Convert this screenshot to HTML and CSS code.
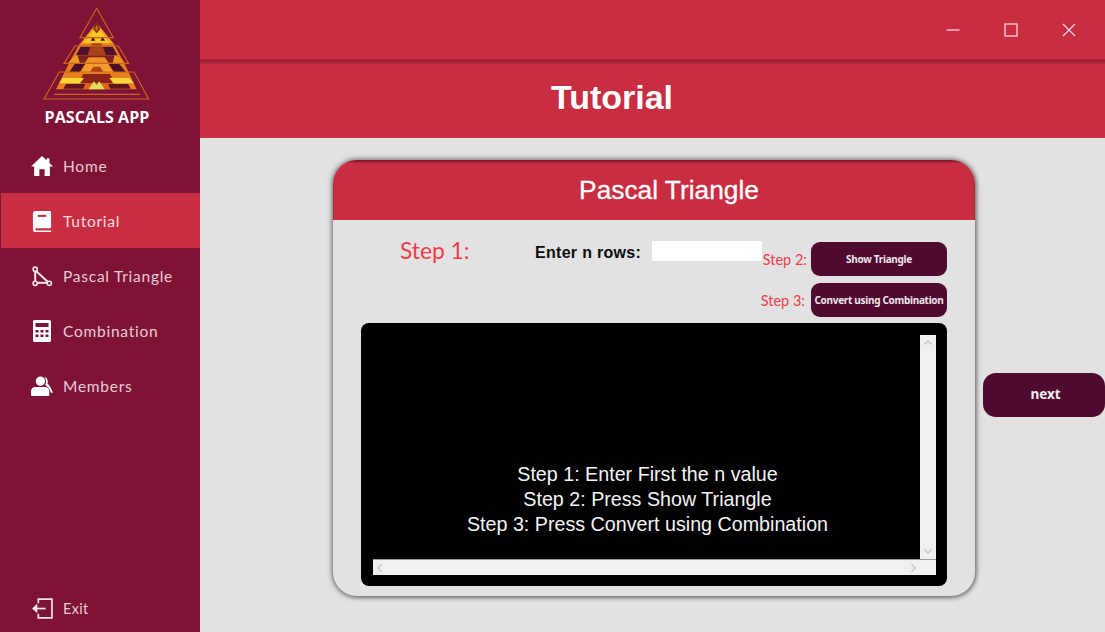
FILE: index.html
```html
<!DOCTYPE html>
<html lang="en">
<head>
<meta charset="utf-8">
<title>Pascals App - Tutorial</title>
<link rel="stylesheet" href="styles.css">
</head>
<body>
<div class="app">
  <aside class="sidebar">
    <div class="brand">
      <svg class="logo" viewBox="0 0 390 315" aria-hidden="true">
        <g class="logo-art">
          <polygon points="200,68 252,132 150,132" fill="#f0a51c"/>
          <polygon points="176,112 190,92 212,92 226,112 242,130 158,130" fill="#f8c626"/>
          <polygon points="200,64 211,86 200,100 189,86" fill="#7d2c12"/>
          <polygon points="200,74 205,86 200,94 195,86" fill="#d8661c"/>
          <polygon points="182,122 189,110 196,122" fill="#4a1022"/>
          <polygon points="211,122 218,110 225,122" fill="#4a1022"/>
          <polygon points="150,130 250,130 276,176 296,216 320,268 78,268 104,216 124,176" fill="#e67f1c"/>
          <polygon points="152,140 248,140 262,165 138,165" fill="#4c0f2e"/>
          <polygon points="186,130 214,130 228,165 172,165" fill="#a8401a"/>
          <polygon points="140,166 260,166 272,190 128,190" fill="#7a2020"/>
          <polygon points="126,176 142,164 150,190 114,190" fill="#ee9a20"/>
          <polygon points="254,164 272,176 286,190 248,190" fill="#ee9a20"/>
          <polygon points="176,172 224,172 238,192 162,192" fill="#f09026"/>
          <polygon points="118,216 134,192 166,192 150,216" fill="#4a0f26"/>
          <polygon points="236,192 268,192 288,216 252,216" fill="#4a0f26"/>
          <polygon points="166,192 234,192 250,218 150,218" fill="#f29c2c"/>
          <polygon points="190,200 210,200 220,216 180,216" fill="#b53c18"/>
          <polygon points="160,222 240,222 254,250 146,250" fill="#8d2216"/>
          <polygon points="98,234 162,234 150,250 88,250" fill="#f9d63a"/>
          <polygon points="238,234 298,234 312,250 250,250" fill="#f9d63a"/>
          <polygon points="108,252 166,252 160,266 100,266" fill="#5e1420"/>
          <polygon points="234,252 294,252 302,266 240,266" fill="#5e1420"/>
          <polygon points="166,250 234,250 238,268 162,268" fill="#e0621c"/>
          <polygon points="176,268 192,244 200,256 208,244 224,268" fill="#dde05c"/>
          <g class="logo-lines">
            <polygon points="200,25 250,113 150,113"/>
            <polygon points="135,138 265,138 296,190 102,190"/>
            <polygon points="88,216 312,216 356,297 42,297"/>
            <line x1="72" y1="283" x2="330" y2="283"/>
          </g>
        </g>
      </svg>
      <div class="brand-name">PASCALS APP</div>
    </div>
    <nav class="nav">
      <a class="nav-item">
        <svg class="nav-icon" viewBox="0 0 21 21"><path class="fill" d="M10.5 1 15 5.2V3h2.6v4.6L21 11h-3v9h-5v-6.5H8V20H3v-9H0z"/></svg>
        <span>Home</span>
      </a>
      <a class="nav-item active">
        <svg class="nav-icon" viewBox="0 0 21 23"><path class="fill" d="M4 1h15a1 1 0 0 1 1 1v16a1 1 0 0 1-1 1H4a2 2 0 0 0 0 2.4h16V23H4a3 3 0 0 1-3-3V4a3 3 0 0 1 3-3z"/><rect class="cut" x="6" y="5" width="9" height="2.2"/></svg>
        <span>Tutorial</span>
      </a>
      <a class="nav-item">
        <svg class="nav-icon" viewBox="0 0 21 21"><g class="stroke tri"><line x1="4" y1="5" x2="4" y2="17"/><line x1="4" y1="5" x2="17" y2="17"/><line x1="4" y1="17" x2="17" y2="17"/><circle class="node" cx="4" cy="4" r="2"/><circle class="node" cx="4" cy="17.5" r="2"/><circle class="node" cx="17.5" cy="17.5" r="2"/></g></svg>
        <span>Pascal Triangle</span>
      </a>
      <a class="nav-item">
        <svg class="nav-icon" viewBox="0 0 21 22"><path class="fill" fill-rule="evenodd" d="M3 0h15a1.500 1.500 0 0 1 1.500 1.500v19A1.500 1.500 0 0 1 18 22H3a1.500 1.500 0 0 1-1.500-1.500v-19A1.500 1.500 0 0 1 3 0zm1 3v4h13V3zm0 7v2.500h3V10zm5 0v2.500h3V10zm5 0v2.500h3V10zm-10 4.500V17h3v-2.500zm5 0V17h3v-2.500zm5 0V17h3v-2.500z"/></svg>
        <span>Combination</span>
      </a>
      <a class="nav-item">
        <svg class="nav-icon" viewBox="0 0 21 19"><path class="fill" d="M9 .5a4.500 4.500 0 1 1 0 9 4.500 4.500 0 0 1 0-9zM4.500 10.500h9a4 4 0 0 1 4 4V18a1 1 0 0 1-1 1H1a1 1 0 0 1-1-1v-3.500a4 4 0 0 1 4.500-4zM12.500 1c3 .3 4.200 3.800 3.200 6 1.800 1.500 4 5 5.300 9h-2c-.8-3-2.800-5.800-5.500-7.400 1.500-2.200 1.200-5.400-1-7.600z"/></svg>
        <span>Members</span>
      </a>
    </nav>
    <a class="nav-item exit">
      <svg class="nav-icon" viewBox="0 0 21 21"><g class="stroke"><path d="M7 6V2h13v18H7v-4"/><path d="M14 11H2"/><path class="arrow" d="M6 6.500 1 11l5 4.500z"/></g></svg>
      <span>Exit</span>
    </a>
  </aside>

  <main class="main">
    <div class="topbar">
      <svg class="win-icon" viewBox="0 0 14 14"><line x1="0.500" y1="7" x2="13.500" y2="7"/></svg>
      <svg class="win-icon" viewBox="0 0 14 14"><rect x="1" y="1" width="12" height="12"/></svg>
      <svg class="win-icon" viewBox="0 0 14 14"><path d="M1 1l12 12M13 1 1 13"/></svg>
    </div>
    <header class="titlebar"><h1>Tutorial</h1></header>
    <section class="content">
      <div class="card">
        <div class="card-head"><h2>Pascal Triangle</h2></div>
        <div class="card-body">
          <div class="controls">
            <div class="input-group">
              <span class="step step-big">Step 1:</span>
              <label class="enter-label" for="rows">Enter n rows:</label>
              <input class="rows-input" id="rows" type="text">
            </div>
            <div class="actions">
              <div class="action-row">
                <span class="step step-two">Step 2:</span>
                <button class="btn btn-small">Show Triangle</button>
              </div>
              <div class="action-row">
                <span class="step step-three">Step 3:</span>
                <button class="btn btn-small">Convert using Combination</button>
              </div>
            </div>
          </div>
          <div class="panel">
            <div class="viewer">
              <div class="output">
                <p>Step 1: Enter First the n value</p>
                <p>Step 2: Press Show Triangle</p>
                <p>Step 3: Press Convert using Combination</p>
              </div>
              <div class="vscroll">
                <svg class="chev" viewBox="0 0 10 10"><path d="M1.500 6.500 5 3l3.500 3.500"/></svg>
                <svg class="chev" viewBox="0 0 10 10"><path d="M1.500 3.500 5 7l3.500-3.500"/></svg>
              </div>
              <div class="hscroll">
                <svg class="chev" viewBox="0 0 10 10"><path d="M6.500 1.500 3 5l3.500 3.500"/></svg>
                <svg class="chev" viewBox="0 0 10 10"><path d="M3.500 1.500 7 5 3.500 8.500"/></svg>
              </div>
            </div>
          </div>
        </div>
      </div>
      <button class="btn btn-next">next</button>
    </section>
  </main>
</div>
</body>
</html>
```

FILE: styles.css
```css
* { box-sizing: border-box; }
html, body { margin: 0; height: 100%; overflow: hidden; }
body { font-family: "Liberation Sans", Arial, sans-serif; background: #e2e2e2; }
.app { display: flex; width: 1105px; height: 632px; }

.sidebar { width: 200px; flex: none; background: #7f1335; display: flex; flex-direction: column; padding-bottom: 1px; }
.brand { height: 138px; display: flex; flex-direction: column; }
.logo { width: 130px; height: 105px; margin-left: 30px; flex: none; display: block; }
.logo-art { filter: blur(1px); }
.logo-lines { fill: none; stroke: #c9661c; stroke-width: 3.500; }
.brand-name { color: #fff; font: 700 16px "Open Sans", sans-serif; text-align: center; margin-top: 1px; padding-right: 6px; line-height: 22px; letter-spacing: .05px; }
.nav { flex: 1; }
.nav-item { display: flex; align-items: center; height: 55px; padding-left: 31px; color: #e8ccd5; font: 400 15.500px Lato, sans-serif; letter-spacing: .75px; }
.nav-item.active { background: #c82d42; margin-left: 1px; padding-left: 30px; color: #f6dde1; }
.nav-item.exit { height: 46px; font-size: 14.500px; letter-spacing: .3px; }
.nav-icon { width: 22px; height: 22px; margin-right: 10px; flex: none; }
.fill { fill: #fff; }
.cut { fill: #c82d42; }
.stroke { fill: none; stroke: #f4e6ea; stroke-width: 1.600; }
.stroke.tri { stroke-width: 1.900; }
.stroke .node { fill: #7f1335; stroke-width: 1.500; }
.stroke .arrow { fill: #f4e6ea; stroke: none; }

.main { flex: 1; display: flex; flex-direction: column; min-width: 0; }
.topbar { height: 65px; flex: none; background: linear-gradient(#c82d42 0 59px, #8c1a30 60px, #a82238 62px, #c82d42 65px); display: flex; justify-content: flex-end; align-items: flex-start; gap: 44px; padding: 23px 29px 0 0; }
.win-icon { width: 14px; height: 14px; fill: none; stroke: #f6d5da; stroke-width: 1.300; }
.titlebar { height: 73px; flex: none; background: #c82d42; display: flex; align-items: center; justify-content: center; padding: 0 81px 8px 0; }
.titlebar h1 { margin: 0; color: #fff; font: 700 34px "Liberation Sans", sans-serif; }
.content { flex: 1; display: flex; align-items: flex-start; padding: 22px 0 0 133px; background: #e2e2e2; min-height: 0; }

.card { width: 642px; height: 436px; flex: none; border-radius: 24px; background: #e2e2e2; box-shadow: 0 0 5px 1px rgba(60,60,60,.7), 1px 2px 4px rgba(0,0,0,.2); display: flex; flex-direction: column; overflow: hidden; }
.card-head { height: 60px; flex: none; background: #c82d42; box-shadow: inset 0 2px 2px rgba(90,10,25,.65); display: flex; align-items: center; justify-content: center; padding-left: 30px; }
.card-head h2 { margin: 0; color: #fff; font: 400 26.300px "Liberation Sans", sans-serif; -webkit-text-stroke: .3px #fff; }
.card-body { flex: 1; display: flex; flex-direction: column; padding: 0 28px 10px; min-height: 0; }

.controls { height: 103px; flex: none; display: flex; justify-content: space-between; }
.input-group { display: flex; align-items: flex-start; padding-top: 16px; }
.step { color: #f23a49; font-family: Lato, sans-serif; white-space: nowrap; }
.step-big { font-size: 22.800px; line-height: 28px; margin-left: 39px; width: 135px; flex: none; }
.enter-label { color: #0c0c0c; font: 700 16px "Liberation Sans", sans-serif; letter-spacing: .3px; width: 117px; flex: none; margin-top: 8px; }
.rows-input { width: 110px; height: 20px; border: 0; background: #fff; padding: 0; margin-top: 5px; flex: none; }
.actions { width: 185px; flex: none; display: flex; flex-direction: column; gap: 7px; padding-top: 22px; }
.action-row { display: flex; align-items: center; justify-content: flex-end; }
.step-two { font-size: 14.500px; margin-right: 4px; }
.step-three { font-size: 14.500px; margin-right: 6px; }
.btn { border: 0; background: #4f0a30; color: #f1e6ec; font-family: "Noto Sans", sans-serif; font-weight: 700; padding: 0; }
.btn-small { width: 136px; height: 34px; flex: none; border-radius: 9px; font-size: 10px; letter-spacing: -.3px; padding-bottom: 1px; }

.panel { flex: 1; background: #000; border-radius: 8px; padding: 12px 11px 11px 12px; min-height: 0; }
.viewer { height: 100%; display: grid; grid-template-columns: 1fr 16px; grid-template-rows: 1fr 16px; }
.output { color: #f4f4f4; font-size: 19.700px; line-height: 25px; text-align: center; display: flex; flex-direction: column; justify-content: flex-end; padding: 0 0 22px 2px; }
.output p { margin: 0; }
.vscroll { background: #f0f0f0; display: flex; flex-direction: column; justify-content: space-between; align-items: center; padding: 3px 0; }
.hscroll { grid-column: 1 / 3; background: #f0f0f0; display: flex; justify-content: space-between; align-items: center; padding: 0 18px 0 2px; border-top: 1px solid #9a9a9a; }
.chev { width: 10px; height: 10px; fill: none; stroke: #c6c6c6; stroke-width: 1.500; }

.btn-next { width: 122px; height: 44px; margin: 213px 0 0 8px; flex: none; border-radius: 13px; font-size: 13.500px; background: #4f0a30; color: #f5eef2; padding: 0 0 2px 3px; }
```
